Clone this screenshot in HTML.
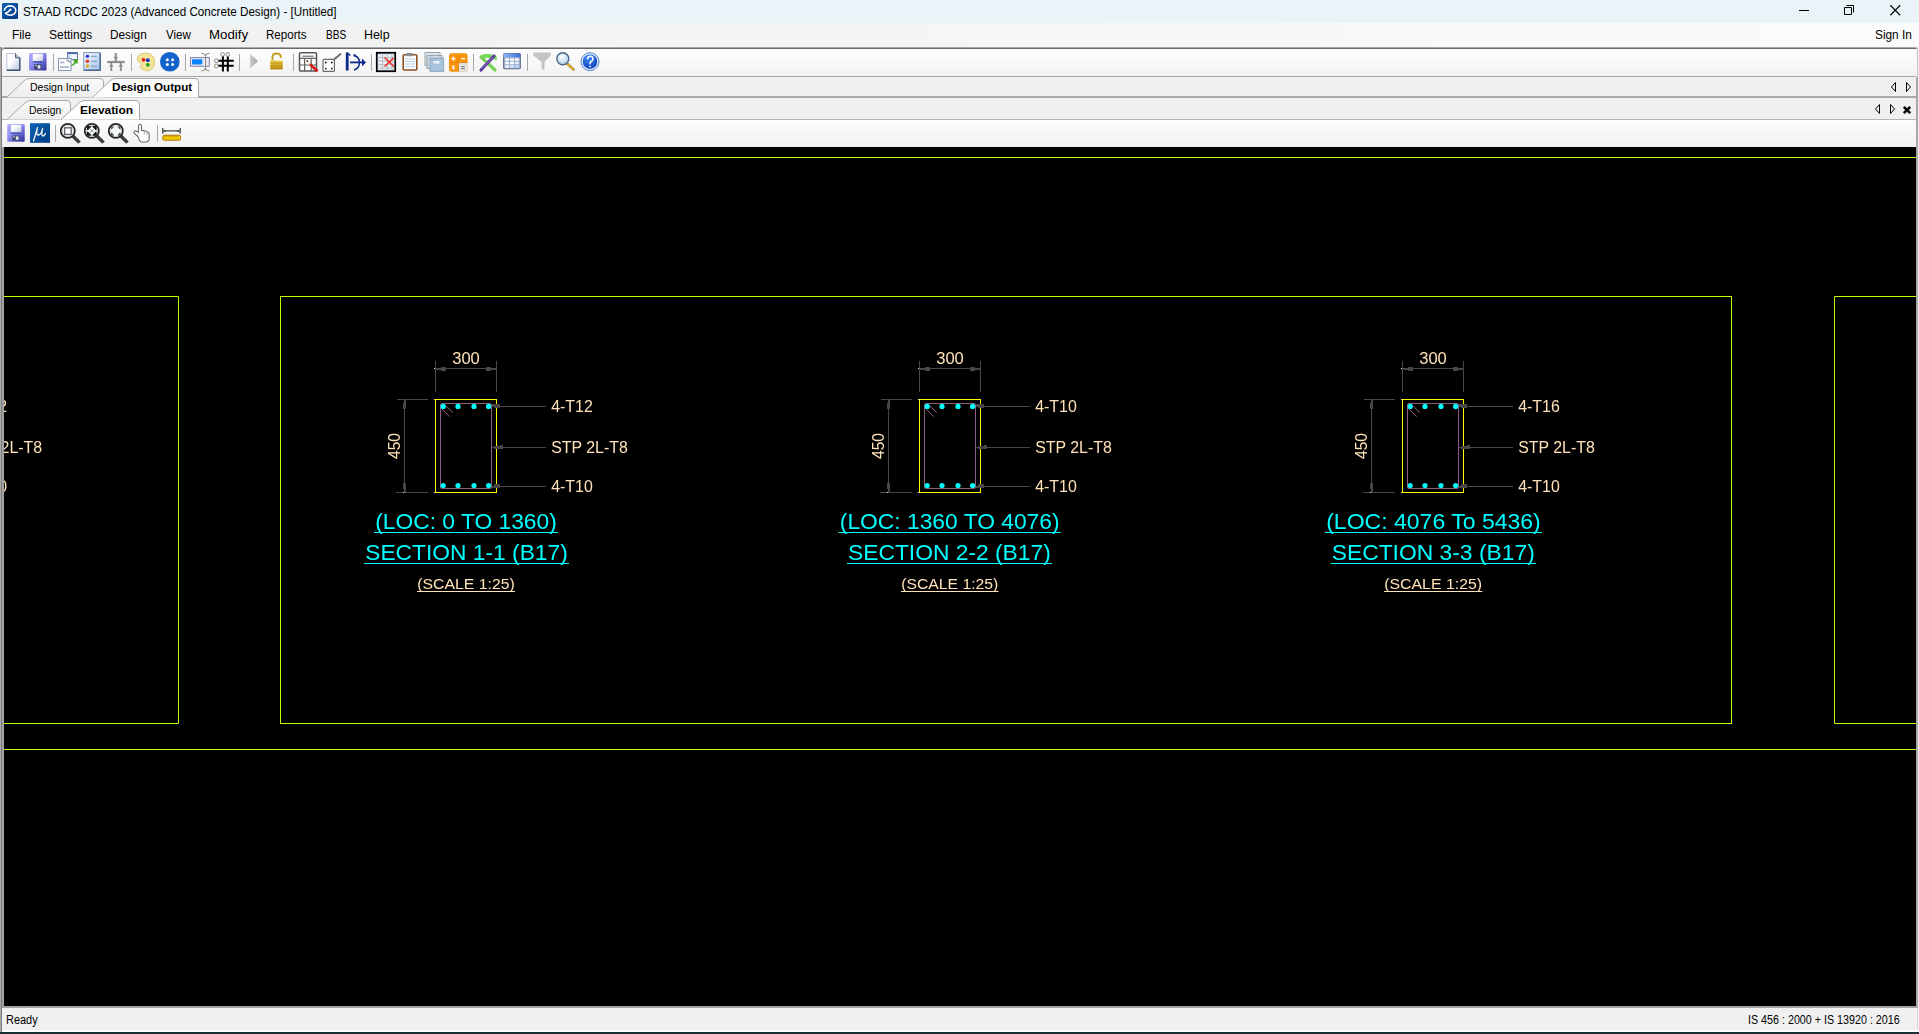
<!DOCTYPE html>
<html><head><meta charset="utf-8">
<style>
*{margin:0;padding:0;box-sizing:border-box}
html,body{width:1919px;height:1034px;overflow:hidden;background:#f0f0f0;font-family:"Liberation Sans",sans-serif;font-size:12px;color:#000}
.a{position:absolute}
.t{position:absolute;white-space:nowrap;line-height:1}
#title{left:0;top:0;width:1919px;height:23px;background:#eaf3f7}
#menu{left:0;top:23px;width:1919px;height:24px;background:linear-gradient(to right,#f0f0f0,#fbfbfb)}
#tb{left:2px;top:47px;width:1916px;height:30px;border-top:1px solid #a8a8a8;box-shadow:inset 0 1px 0 #686868;background:linear-gradient(#fefefe,#f2f2f2);border-bottom:1px solid #a6a6a6;border-top-left-radius:3px;border-top-right-radius:3px}
#tabs1{left:2px;top:77px;width:1915px;height:21px;background:#f0f0f0;border-bottom:2px solid #a9a9a9}
#tabs2{left:2px;top:99px;width:1915px;height:21px;background:#f0f0f0;border-bottom:1px solid #b4b4b4}
#tb2{left:2px;top:120px;width:1915px;height:27px;background:linear-gradient(#fdfdfd,#f0f0f0)}
#cframe{left:2px;top:147px;width:1916px;height:861px;background:#a2a2a2}
#canvas{left:4px;top:147px;width:1912px;height:859px;background:#000;overflow:hidden}
#status{left:2px;top:1008px;width:1916px;height:24px;background:#f0f0f0;border-bottom:1px solid #dadada;border-right:1px solid #d8d8d8}
#swhite{left:0;top:1030px;width:1919px;height:2px;background:#fdfdfd}
#lb{left:0;top:47px;width:2px;height:985px;background:linear-gradient(to right,#a8a8a8 50%,#7e7e7e 50%)}
#rb{left:1916px;top:77px;width:2px;height:931px;background:#a8a8a8}
#rbt{left:1916px;top:49px;width:2px;height:28px;background:linear-gradient(to right,#f4f4f4 0,#f4f4f4 50%,#c8c8c8 50%)}
#bottom{left:0;top:1032px;width:1919px;height:2px;background:#1c2d33}
</style></head><body>
<div id="title" class="a"></div>
<div id="menu" class="a"></div>
<div id="tb" class="a"></div>
<div id="tabs1" class="a"></div>
<div id="tabs2" class="a"></div>
<div id="tb2" class="a"></div>
<div id="cframe" class="a"></div>
<div id="canvas" class="a">
<svg class="a" style="left:0;top:0;will-change:transform" width="1912" height="859" viewBox="4 147 1912 859">
<g stroke="#bfff00" stroke-width="1" fill="none">
<path d="M0 157.5H1920M0 749.5H1920"/>
<path d="M0 296.5H178.5V723.5H0"/>
<rect x="280.5" y="296.5" width="1451" height="427"/>
<path d="M1920 296.5H1834.5V723.5H1920"/>
</g>
<g stroke="#474747" stroke-width="1" fill="none">
<path d="M435.5 361V392M496.5 361V392M435.5 368.5H496.5"/>
<path d="M397 399.5H428M396 492.5H428M404.5 399.5V492.5" transform="translate(0,0)"/>
<path d="M491 406.5H546M491 447.5H546M491 486.5H546"/>
</g>
<g fill="#474747">
<rect x="441" y="367" width="5" height="4"/><rect x="486" y="367" width="5" height="4"/>
<rect x="436" y="368" width="5" height="2"/><rect x="491" y="368" width="5" height="2"/>
<rect x="404" y="400" width="2" height="4"/><rect x="404" y="488" width="2" height="4"/>
<rect x="403" y="403" width="3" height="6"/><rect x="403" y="483" width="3" height="6"/>
</g>
<g fill="#ffe2b8"><rect x="434" y="368" width="1" height="1"/><rect x="434" y="399" width="1" height="1"/><rect x="434" y="492" width="1" height="1"/><rect x="403" y="492" width="1" height="1"/></g>
<rect x="435.5" y="399.5" width="61" height="93" fill="none" stroke="#ffff00" stroke-width="1"/>
<rect x="440.5" y="403.5" width="51" height="85" rx="1.5" fill="none" stroke="#8d5b82" stroke-width="1"/>
<path d="M441.5 408.5L449.7 416.6M446 405.8L452.8 412.7" stroke="#8d5b82" stroke-width="1"/>
<g fill="#474747">
<rect x="492" y="404" width="8" height="2"/><rect x="494" y="406" width="6" height="2"/>
<rect x="494" y="446" width="9" height="3"/><rect x="500" y="445" width="3" height="1"/>
<rect x="494" y="484" width="6" height="2"/><rect x="492" y="486" width="8" height="2"/>
</g>
<g fill="#00ffff">
<circle cx="443.2" cy="406.4" r="2.6"/>
<circle cx="443.2" cy="485.5" r="2.6"/>
<circle cx="458" cy="406.4" r="2.6"/>
<circle cx="458" cy="485.5" r="2.6"/>
<circle cx="474" cy="406.4" r="2.6"/>
<circle cx="474" cy="485.5" r="2.6"/>
<circle cx="488.6" cy="406.4" r="2.6"/>
<circle cx="488.6" cy="485.5" r="2.6"/>
</g>
<g font-family="Liberation Sans, sans-serif">
<text x="452.2" y="364.2" font-size="16.2" fill="#ffe2b8" stroke="#000" stroke-width="0" textLength="27.6" lengthAdjust="spacingAndGlyphs">300</text>
<text x="0" y="0" font-size="16.2" fill="#ffe2b8" stroke="#000" stroke-width="0" textLength="26" lengthAdjust="spacingAndGlyphs" transform="translate(400.2,459) rotate(-90)">450</text>
<text x="551.2" y="412" font-size="15.6" fill="#ffe2b8" stroke="#000" stroke-width="0" textLength="41.6" lengthAdjust="spacingAndGlyphs">4-T12</text>
<text x="551.2" y="453" font-size="15.6" fill="#ffe2b8" stroke="#000" stroke-width="0" textLength="76.6" lengthAdjust="spacingAndGlyphs">STP 2L-T8</text>
<text x="551.2" y="491.7" font-size="15.6" fill="#ffe2b8" stroke="#000" stroke-width="0" textLength="41.6" lengthAdjust="spacingAndGlyphs">4-T10</text>
<text x="375.2" y="528.7" font-size="22.3" fill="#00ffff" stroke="#000" stroke-width="0" textLength="181.6" lengthAdjust="spacingAndGlyphs">(LOC: 0 TO 1360)</text>
<text x="365.2" y="559.8" font-size="22.3" fill="#00ffff" stroke="#000" stroke-width="0" textLength="202.6" lengthAdjust="spacingAndGlyphs">SECTION 1-1 (B17)</text>
<text x="417.2" y="588.5" font-size="14.7" fill="#ffe2b8" stroke="#000" stroke-width="0" textLength="97.6" lengthAdjust="spacingAndGlyphs">(SCALE 1:25)</text>
</g>
<path d="M374 532.5H558M364 563.5H569" stroke="#00ffff" stroke-width="1"/>
<path d="M417 591.5H515" stroke="#ffe2b8" stroke-width="1"/>
<g stroke="#474747" stroke-width="1" fill="none">
<path d="M919.5 361V392M980.5 361V392M919.5 368.5H980.5"/>
<path d="M397 399.5H428M396 492.5H428M404.5 399.5V492.5" transform="translate(484,0)"/>
<path d="M975 406.5H1030M975 447.5H1030M975 486.5H1030"/>
</g>
<g fill="#474747">
<rect x="925" y="367" width="5" height="4"/><rect x="970" y="367" width="5" height="4"/>
<rect x="920" y="368" width="5" height="2"/><rect x="975" y="368" width="5" height="2"/>
<rect x="888" y="400" width="2" height="4"/><rect x="888" y="488" width="2" height="4"/>
<rect x="887" y="403" width="3" height="6"/><rect x="887" y="483" width="3" height="6"/>
</g>
<g fill="#ffe2b8"><rect x="918" y="368" width="1" height="1"/><rect x="918" y="399" width="1" height="1"/><rect x="918" y="492" width="1" height="1"/><rect x="887" y="492" width="1" height="1"/></g>
<rect x="919.5" y="399.5" width="61" height="93" fill="none" stroke="#ffff00" stroke-width="1"/>
<rect x="924.5" y="403.5" width="51" height="85" rx="1.5" fill="none" stroke="#8d5b82" stroke-width="1"/>
<path d="M925.5 408.5L933.7 416.6M930 405.8L936.8 412.7" stroke="#8d5b82" stroke-width="1"/>
<g fill="#474747">
<rect x="976" y="404" width="8" height="2"/><rect x="978" y="406" width="6" height="2"/>
<rect x="978" y="446" width="9" height="3"/><rect x="984" y="445" width="3" height="1"/>
<rect x="978" y="484" width="6" height="2"/><rect x="976" y="486" width="8" height="2"/>
</g>
<g fill="#00ffff">
<circle cx="927.2" cy="406.4" r="2.6"/>
<circle cx="927.2" cy="485.5" r="2.6"/>
<circle cx="942" cy="406.4" r="2.6"/>
<circle cx="942" cy="485.5" r="2.6"/>
<circle cx="958" cy="406.4" r="2.6"/>
<circle cx="958" cy="485.5" r="2.6"/>
<circle cx="972.6" cy="406.4" r="2.6"/>
<circle cx="972.6" cy="485.5" r="2.6"/>
</g>
<g font-family="Liberation Sans, sans-serif">
<text x="936.2" y="364.2" font-size="16.2" fill="#ffe2b8" stroke="#000" stroke-width="0" textLength="27.6" lengthAdjust="spacingAndGlyphs">300</text>
<text x="0" y="0" font-size="16.2" fill="#ffe2b8" stroke="#000" stroke-width="0" textLength="26" lengthAdjust="spacingAndGlyphs" transform="translate(884.2,459) rotate(-90)">450</text>
<text x="1035.2" y="412" font-size="15.6" fill="#ffe2b8" stroke="#000" stroke-width="0" textLength="41.6" lengthAdjust="spacingAndGlyphs">4-T10</text>
<text x="1035.2" y="453" font-size="15.6" fill="#ffe2b8" stroke="#000" stroke-width="0" textLength="76.6" lengthAdjust="spacingAndGlyphs">STP 2L-T8</text>
<text x="1035.2" y="491.7" font-size="15.6" fill="#ffe2b8" stroke="#000" stroke-width="0" textLength="41.6" lengthAdjust="spacingAndGlyphs">4-T10</text>
<text x="839.8" y="528.7" font-size="22.3" fill="#00ffff" stroke="#000" stroke-width="0" textLength="219.8" lengthAdjust="spacingAndGlyphs">(LOC: 1360 TO 4076)</text>
<text x="848.0" y="559.8" font-size="22.3" fill="#00ffff" stroke="#000" stroke-width="0" textLength="202.8" lengthAdjust="spacingAndGlyphs">SECTION 2-2 (B17)</text>
<text x="901.2" y="588.5" font-size="14.7" fill="#ffe2b8" stroke="#000" stroke-width="0" textLength="97.1" lengthAdjust="spacingAndGlyphs">(SCALE 1:25)</text>
</g>
<path d="M838.6 532.5H1060.8M846.8 563.5H1052" stroke="#00ffff" stroke-width="1"/>
<path d="M901 591.5H998.5" stroke="#ffe2b8" stroke-width="1"/>
<g stroke="#474747" stroke-width="1" fill="none">
<path d="M1402.5 361V392M1463.5 361V392M1402.5 368.5H1463.5"/>
<path d="M397 399.5H428M396 492.5H428M404.5 399.5V492.5" transform="translate(967,0)"/>
<path d="M1458 406.5H1513M1458 447.5H1513M1458 486.5H1513"/>
</g>
<g fill="#474747">
<rect x="1408" y="367" width="5" height="4"/><rect x="1453" y="367" width="5" height="4"/>
<rect x="1403" y="368" width="5" height="2"/><rect x="1458" y="368" width="5" height="2"/>
<rect x="1371" y="400" width="2" height="4"/><rect x="1371" y="488" width="2" height="4"/>
<rect x="1370" y="403" width="3" height="6"/><rect x="1370" y="483" width="3" height="6"/>
</g>
<g fill="#ffe2b8"><rect x="1401" y="368" width="1" height="1"/><rect x="1401" y="399" width="1" height="1"/><rect x="1401" y="492" width="1" height="1"/><rect x="1370" y="492" width="1" height="1"/></g>
<rect x="1402.5" y="399.5" width="61" height="93" fill="none" stroke="#ffff00" stroke-width="1"/>
<rect x="1407.5" y="403.5" width="51" height="85" rx="1.5" fill="none" stroke="#8d5b82" stroke-width="1"/>
<path d="M1408.5 408.5L1416.7 416.6M1413 405.8L1419.8 412.7" stroke="#8d5b82" stroke-width="1"/>
<g fill="#474747">
<rect x="1459" y="404" width="8" height="2"/><rect x="1461" y="406" width="6" height="2"/>
<rect x="1461" y="446" width="9" height="3"/><rect x="1467" y="445" width="3" height="1"/>
<rect x="1461" y="484" width="6" height="2"/><rect x="1459" y="486" width="8" height="2"/>
</g>
<g fill="#00ffff">
<circle cx="1410.2" cy="406.4" r="2.6"/>
<circle cx="1410.2" cy="485.5" r="2.6"/>
<circle cx="1425" cy="406.4" r="2.6"/>
<circle cx="1425" cy="485.5" r="2.6"/>
<circle cx="1441" cy="406.4" r="2.6"/>
<circle cx="1441" cy="485.5" r="2.6"/>
<circle cx="1455.6" cy="406.4" r="2.6"/>
<circle cx="1455.6" cy="485.5" r="2.6"/>
</g>
<g font-family="Liberation Sans, sans-serif">
<text x="1419.2" y="364.2" font-size="16.2" fill="#ffe2b8" stroke="#000" stroke-width="0" textLength="27.6" lengthAdjust="spacingAndGlyphs">300</text>
<text x="0" y="0" font-size="16.2" fill="#ffe2b8" stroke="#000" stroke-width="0" textLength="26" lengthAdjust="spacingAndGlyphs" transform="translate(1367.2,459) rotate(-90)">450</text>
<text x="1518.2" y="412" font-size="15.6" fill="#ffe2b8" stroke="#000" stroke-width="0" textLength="41.6" lengthAdjust="spacingAndGlyphs">4-T16</text>
<text x="1518.2" y="453" font-size="15.6" fill="#ffe2b8" stroke="#000" stroke-width="0" textLength="76.6" lengthAdjust="spacingAndGlyphs">STP 2L-T8</text>
<text x="1518.2" y="491.7" font-size="15.6" fill="#ffe2b8" stroke="#000" stroke-width="0" textLength="41.6" lengthAdjust="spacingAndGlyphs">4-T10</text>
<text x="1326.2" y="528.7" font-size="22.3" fill="#00ffff" stroke="#000" stroke-width="0" textLength="214.6" lengthAdjust="spacingAndGlyphs">(LOC: 4076 To 5436)</text>
<text x="1331.7" y="559.8" font-size="22.3" fill="#00ffff" stroke="#000" stroke-width="0" textLength="203.1" lengthAdjust="spacingAndGlyphs">SECTION 3-3 (B17)</text>
<text x="1384.2" y="588.5" font-size="14.7" fill="#ffe2b8" stroke="#000" stroke-width="0" textLength="97.9" lengthAdjust="spacingAndGlyphs">(SCALE 1:25)</text>
</g>
<path d="M1325 532.5H1542M1330.5 563.5H1536" stroke="#00ffff" stroke-width="1"/>
<path d="M1384 591.5H1482.3" stroke="#ffe2b8" stroke-width="1"/>
<g stroke="#474747" stroke-width="1" fill="none">
<path d="M-150.2 361V392M-89.2 361V392M-150.2 368.5H-89.2"/>
<path d="M397 399.5H428M396 492.5H428M404.5 399.5V492.5" transform="translate(-585.7,0)"/>
<path d="M-94.7 406.5H-39.7M-94.7 447.5H-39.7M-94.7 486.5H-39.7"/>
</g>
<g fill="#474747">
<rect x="-144.7" y="367" width="5" height="4"/><rect x="-99.7" y="367" width="5" height="4"/>
<rect x="-149.7" y="368" width="5" height="2"/><rect x="-94.7" y="368" width="5" height="2"/>
<rect x="-181.7" y="400" width="2" height="4"/><rect x="-181.7" y="488" width="2" height="4"/>
<rect x="-182.7" y="403" width="3" height="6"/><rect x="-182.7" y="483" width="3" height="6"/>
</g>
<g fill="#ffe2b8"><rect x="-151.7" y="368" width="1" height="1"/><rect x="-151.7" y="399" width="1" height="1"/><rect x="-151.7" y="492" width="1" height="1"/><rect x="-182.7" y="492" width="1" height="1"/></g>
<rect x="-150.2" y="399.5" width="61" height="93" fill="none" stroke="#ffff00" stroke-width="1"/>
<rect x="-145.2" y="403.5" width="51" height="85" rx="1.5" fill="none" stroke="#8d5b82" stroke-width="1"/>
<path d="M-144.2 408.5L-136.0 416.6M-139.7 405.8L-132.9 412.7" stroke="#8d5b82" stroke-width="1"/>
<g fill="#474747">
<rect x="-93.7" y="404" width="8" height="2"/><rect x="-91.7" y="406" width="6" height="2"/>
<rect x="-91.7" y="446" width="9" height="3"/><rect x="-85.7" y="445" width="3" height="1"/>
<rect x="-91.7" y="484" width="6" height="2"/><rect x="-93.7" y="486" width="8" height="2"/>
</g>
<g fill="#00ffff">
<circle cx="-142.5" cy="406.4" r="2.6"/>
<circle cx="-142.5" cy="485.5" r="2.6"/>
<circle cx="-127.7" cy="406.4" r="2.6"/>
<circle cx="-127.7" cy="485.5" r="2.6"/>
<circle cx="-111.7" cy="406.4" r="2.6"/>
<circle cx="-111.7" cy="485.5" r="2.6"/>
<circle cx="-97.1" cy="406.4" r="2.6"/>
<circle cx="-97.1" cy="485.5" r="2.6"/>
</g>
<g font-family="Liberation Sans, sans-serif">
<text x="-133.5" y="364.2" font-size="16.2" fill="#ffe2b8" stroke="#000" stroke-width="0" textLength="27.6" lengthAdjust="spacingAndGlyphs">300</text>
<text x="0" y="0" font-size="16.2" fill="#ffe2b8" stroke="#000" stroke-width="0" textLength="26" lengthAdjust="spacingAndGlyphs" transform="translate(-185.5,459) rotate(-90)">450</text>
<text x="-34.5" y="412" font-size="15.6" fill="#ffe2b8" stroke="#000" stroke-width="0" textLength="41.6" lengthAdjust="spacingAndGlyphs">4-T12</text>
<text x="-34.5" y="453" font-size="15.6" fill="#ffe2b8" stroke="#000" stroke-width="0" textLength="76.6" lengthAdjust="spacingAndGlyphs">STP 2L-T8</text>
<text x="-34.5" y="491.7" font-size="15.6" fill="#ffe2b8" stroke="#000" stroke-width="0" textLength="41.6" lengthAdjust="spacingAndGlyphs">4-T10</text>
<text x="-300.8" y="528.7" font-size="22.3" fill="#00ffff" stroke="#000" stroke-width="0" textLength="101.6" lengthAdjust="spacingAndGlyphs">(LOC)</text>
<text x="-300.8" y="559.8" font-size="22.3" fill="#00ffff" stroke="#000" stroke-width="0" textLength="101.6" lengthAdjust="spacingAndGlyphs">SECTION</text>
<text x="-300.8" y="588.5" font-size="14.7" fill="#ffe2b8" stroke="#000" stroke-width="0" textLength="101.6" lengthAdjust="spacingAndGlyphs">(SCALE 1:25)</text>
</g>
<path d="M-302 532.5H-198M-302 563.5H-198" stroke="#00ffff" stroke-width="1"/>
<path d="M-301 591.5H-199" stroke="#ffe2b8" stroke-width="1"/>
</svg>
</div>
<div id="status" class="a"></div>
<div id="swhite" class="a"></div>
<div id="lb" class="a"></div>
<div id="rb" class="a"></div>
<div id="rbt" class="a"></div>
<div id="bottom" class="a"></div>

<svg class="a" style="left:0;top:0" width="1919" height="147">
<defs>
<linearGradient id="tabg" x1="0" y1="0" x2="0" y2="1"><stop offset="0" stop-color="#fafafa"/><stop offset="1" stop-color="#ededed"/></linearGradient>
</defs>
<path d="M1799 10.5H1809" stroke="#000" stroke-width="1"/>
<path d="M1844.5 7.5H1851.5V14.5H1844.5Z" fill="none" stroke="#000" stroke-width="1"/>
<path d="M1846.5 5.5H1853.5V12.5" fill="none" stroke="#000" stroke-width="1"/>
<path d="M1890.3 5.3L1900.2 15.2M1900.2 5.3L1890.3 15.2" stroke="#111" stroke-width="1.3"/>
<path d="M6.5 97.5L25 80Q27 78.5 30 78.5H100Q103.5 78.5 103.5 82V97.5" fill="url(#tabg)" stroke="#a8a8a8" stroke-width="1"/>
<path d="M92.5 97.5L111 80Q113 78.5 116 78.5H195Q198.5 78.5 198.5 82V97.5" fill="#fdfdfd" stroke="#a8a8a8" stroke-width="1"/>
<path d="M7 119.5L26 102Q28 100.5 31 100.5H67Q70.5 100.5 70.5 104V119.5" fill="url(#tabg)" stroke="#a8a8a8" stroke-width="1"/>
<path d="M61 119.5L80 102Q82 100.5 85 100.5H136Q139.5 100.5 139.5 104V119.5" fill="#fdfdfd" stroke="#a8a8a8" stroke-width="1"/>
<path d="M1895.5 82.5L1891.5 87L1895.5 91.5Z" fill="none" stroke="#000" stroke-width="1"/>
<path d="M1906.5 82.5L1910.5 87L1906.5 91.5Z" fill="none" stroke="#000" stroke-width="1"/>
<path d="M1879.5 104.5L1875.5 109L1879.5 113.5Z" fill="none" stroke="#000" stroke-width="1"/>
<path d="M1890.5 104.5L1894.5 109L1890.5 113.5Z" fill="none" stroke="#000" stroke-width="1"/>
<path d="M1903.8 106.8L1910.2 113.2M1910.2 106.8L1903.8 113.2" stroke="#000" stroke-width="2.5"/>
</svg>

<svg class="a" style="left:0;top:0" width="620" height="147">
<defs>
<linearGradient id="flp" x1="0" y1="0" x2="1" y2="1"><stop offset="0" stop-color="#b4b4ff"/><stop offset="0.45" stop-color="#8c8cf0"/><stop offset="1" stop-color="#2c2c98"/></linearGradient>
<linearGradient id="flpl" x1="0" y1="0" x2="1" y2="1"><stop offset="0.3" stop-color="#ffffff"/><stop offset="1" stop-color="#b8c0d8"/></linearGradient>
<linearGradient id="doc" x1="0" y1="0" x2="1" y2="1"><stop offset="0.4" stop-color="#ffffff"/><stop offset="1" stop-color="#b4c4e0"/></linearGradient>
<linearGradient id="lst" x1="0" y1="0" x2="1" y2="1"><stop offset="0" stop-color="#ffffff"/><stop offset="1" stop-color="#9cc0f0"/></linearGradient>
<linearGradient id="mu" x1="0" y1="0" x2="1" y2="1"><stop offset="0" stop-color="#0a64b8"/><stop offset="1" stop-color="#003c80"/></linearGradient>
<linearGradient id="gold" x1="0" y1="0" x2="0" y2="1"><stop offset="0" stop-color="#f0d050"/><stop offset="1" stop-color="#c09010"/></linearGradient>
<linearGradient id="tbl" x1="0" y1="0" x2="1" y2="0"><stop offset="0" stop-color="#90b8f8"/><stop offset="1" stop-color="#3c70d8"/></linearGradient>
<radialGradient id="lens" cx="0.4" cy="0.35" r="0.7"><stop offset="0" stop-color="#ffffff"/><stop offset="1" stop-color="#a8d0e8"/></radialGradient>
<radialGradient id="help" cx="0.4" cy="0.3" r="0.8"><stop offset="0" stop-color="#3c8cf8"/><stop offset="1" stop-color="#0838b0"/></radialGradient>
<linearGradient id="play" x1="0" y1="0" x2="1" y2="0"><stop offset="0" stop-color="#d0d0d0"/><stop offset="1" stop-color="#a0a0a0"/></linearGradient>
</defs>
<path d="M53.5 54V71" stroke="#a8a8a8" stroke-width="1"/>
<path d="M131.5 54V71" stroke="#a8a8a8" stroke-width="1"/>
<path d="M185.5 54V71" stroke="#a8a8a8" stroke-width="1"/>
<path d="M239.5 54V71" stroke="#a8a8a8" stroke-width="1"/>
<path d="M293.5 54V71" stroke="#a8a8a8" stroke-width="1"/>
<path d="M371.5 54V71" stroke="#a8a8a8" stroke-width="1"/>
<path d="M473.5 54V71" stroke="#a8a8a8" stroke-width="1"/>
<path d="M527.5 54V71" stroke="#a8a8a8" stroke-width="1"/>
<path d="M55.5 125V142" stroke="#a8a8a8" stroke-width="1"/>
<path d="M157.5 125V142" stroke="#a8a8a8" stroke-width="1"/>
<path d="M6.8 53.5H15.5L19.8 57.8V70.3H6.8Z" fill="url(#doc)" stroke="#b8c4d4" stroke-width="1"/>
<path d="M19.8 57.8V70.3H6.8" fill="none" stroke="#3c5070" stroke-width="1.4"/>
<path d="M15.5 53.5V57.8H19.8" fill="#a8b8cc" stroke="#50607c" stroke-width="1"/>
<g transform="translate(29,53)">
<rect x="0" y="0" width="17.5" height="17.5" rx="1" fill="url(#flp)"/>
<rect x="3.8" y="0.8" width="10.3" height="8.4" fill="url(#flpl)"/>
<rect x="3.8" y="8.2" width="10.3" height="1.3" fill="#2838b0"/>
<rect x="5.2" y="11.3" width="7" height="5" fill="#384060"/>
<rect x="8.6" y="12.2" width="2.8" height="3.4" fill="#e0e8f0"/>
<rect x="6" y="12" width="1.6" height="1.4" fill="#c0c8d8"/>
</g>
<rect x="67.5" y="52.5" width="10" height="7" fill="#f4f6fc" stroke="#6880b0" stroke-width="1"/>
<rect x="67.5" y="52.5" width="10" height="1.6" fill="#4868b0"/>
<rect x="68.2" y="54.3" width="2.2" height="4.6" fill="#c8d8f0"/>
<rect x="58.5" y="58.5" width="12.5" height="12" fill="#ffffff" stroke="#8094b4" stroke-width="1"/>
<rect x="60" y="61.5" width="4.5" height="1.8" fill="#a8b8d0"/><rect x="60" y="66.2" width="9" height="1.8" fill="#a8b8d0"/>
<path d="M66.6 59.8L70.5 62.6" stroke="#7088a8" stroke-width="1.2"/>
<path d="M71 65.8C73 64.5 74.5 63 75 61.5L73.3 60.8L77.5 59.2L77.2 63.4L75.8 62.6C75 64.2 73.2 65.6 71 65.8Z" fill="#40b020" stroke="#30a010" stroke-width="0.6"/>
<rect x="83.8" y="52.6" width="16.4" height="17.6" fill="url(#lst)" stroke="#7890b0" stroke-width="1"/>
<path d="M100.2 53V70.2H84.2" fill="none" stroke="#50688c" stroke-width="1.4"/>
<circle cx="87.4" cy="56.2" r="1.8" fill="#3838e0"/><circle cx="87.4" cy="61.2" r="1.8" fill="#e04020"/><circle cx="87.4" cy="66" r="1.8" fill="#e0b020"/>
<path d="M91 56.3H96.8M91 61.3H96.8M91 66.1H96.8" stroke="#8ca0c0" stroke-width="1.2"/>
<g stroke="#8c8c8c" fill="#8c8c8c">
<path d="M115.8 53V61" stroke-width="2"/><path d="M114 57.5H117.6" stroke-width="1.5"/>
<path d="M107.3 62H124.7" stroke-width="2.2"/>
<path d="M111.3 63V71M120.8 63V71" stroke-width="1.8"/>
<path d="M109.8 66.5L111.3 64L112.8 66.5ZM119.3 66.5L120.8 64L122.3 66.5Z" stroke-width="0.8"/>
</g>
<path d="M145.5 53.2C151 53 155 57 154.6 62.5C154.4 66.5 152 70.5 148 70.8C144.5 71 141 69 140 66.5C141.5 65 142.5 63.5 140.5 62.8C138.5 62.2 137 60.5 137.4 58.2C138 55 141.5 53.3 145.5 53.2Z" fill="#f2e49a" stroke="#d8c060" stroke-width="0.9"/>
<circle cx="143.5" cy="59.8" r="1.9" fill="#e02010"/><circle cx="147.8" cy="60.2" r="1.9" fill="#1030c0"/><circle cx="147.8" cy="64.8" r="1.9" fill="#20a020"/>
<circle cx="169.8" cy="61.7" r="9.8" fill="#1262cc"/>
<g fill="#ffffff"><circle cx="167.3" cy="59.7" r="1.5"/><circle cx="172.6" cy="59.7" r="1.5"/><circle cx="167.3" cy="64.4" r="1.5"/><circle cx="172.6" cy="64.4" r="1.5"/></g>
<rect x="190.5" y="57.6" width="18.8" height="8.6" fill="#ecebf0" stroke="#8080a8" stroke-width="1"/>
<rect x="192" y="59.2" width="10.3" height="5.2" rx="0.8" fill="#0a84ff"/>
<path d="M205.5 54V70M201.5 53.2Q205.5 53.5 205.5 56Q205.5 53.5 209.5 53.2M201.5 71Q205.5 70.7 205.5 68Q205.5 70.7 209.5 71" fill="none" stroke="#8a8a8a" stroke-width="1"/>
<path d="M222.9 53V71.5M227.8 53V71.5M217 60.8H233.7M217 65.8H233.7" stroke="#000" stroke-width="2"/>
<g fill="#f4f4f4" stroke="#909090" stroke-width="1"><circle cx="222.6" cy="54.4" r="1.9"/><circle cx="227.8" cy="54.4" r="1.9"/><circle cx="216.4" cy="60.8" r="1.9"/><circle cx="216.4" cy="66" r="1.9"/></g>
<path d="M250 53.8L258 61.2L250 68.3Z" fill="url(#play)"/>
<path d="M272.5 60.5V57Q272.5 53.4 276.6 53.4Q280.8 53.4 280.8 57V58" fill="none" stroke="#c8a020" stroke-width="2"/>
<rect x="270.2" y="60.5" width="12.6" height="9" rx="0.8" fill="url(#gold)"/>
<path d="M270.5 63H282.5M270.5 65.5H282.5M270.5 68H282.5" stroke="#b08810" stroke-width="0.7"/>
<rect x="299.5" y="52.7" width="17" height="18.4" rx="1" fill="#ffffff" stroke="#585858" stroke-width="1.5"/>
<path d="M302.5 56.2H313.6" stroke="#707070" stroke-width="1.2"/>
<path d="M300 58.4H316M300 65H316M304.6 58.4V71M311.2 58.4V71" stroke="#606060" stroke-width="1.2"/>
<path d="M310.5 63.5L318.2 70.2L316.5 72L309 64.8Z" fill="#e81818" stroke="#b00000" stroke-width="0.6"/><path d="M306.8 60.5L310.8 63.3L309.2 65.2Z" fill="#e8d8b8"/><circle cx="307.3" cy="61" r="0.9" fill="#303030"/>
<rect x="323" y="59.4" width="11.4" height="12" rx="1" fill="#ffffff" stroke="#6c6c6c" stroke-width="1.2"/>
<g fill="#111"><circle cx="325.8" cy="62.5" r="0.9"/><circle cx="331.8" cy="62.5" r="0.9"/><circle cx="325.8" cy="68.6" r="0.9"/><circle cx="331.8" cy="68.6" r="0.9"/></g>
<path d="M334 59.5L340.5 54" stroke="#707070" stroke-width="2" stroke-linecap="round"/>
<g stroke="#0c2888" fill="none">
<path d="M347.2 52.5V70.5" stroke-width="2.8"/><path d="M347.2 53L350.5 55.5" stroke-width="1.4"/>
<path d="M350 62.4H363" stroke-width="1.8"/>
<path d="M354 55.5Q359.5 57 359.5 62.4Q359.5 68 354 70" stroke-width="1.5"/>
</g>
<path d="M362 58.5L366 62.4L362 66.2Z" fill="#0c2888"/><rect x="353.5" y="54.2" width="2" height="2" fill="#0c2888"/>
<rect x="376.8" y="52.8" width="18.4" height="18.4" fill="#e4eefa" stroke="#000" stroke-width="1.8"/>
<path d="M382.5 53.5V70.5M387.5 53.5V70.5M392 53.5V70.5M377.5 57.5H394.5M377.5 61H394.5M377.5 64.5H394.5M377.5 68H394.5" stroke="#b8b8b8" stroke-width="0.9"/>
<path d="M384.5 57.5L393.8 66.5M393.5 58.2L384.5 66.5" stroke="#f03020" stroke-width="1.6"/>
<rect x="403.2" y="54.8" width="13.6" height="15.2" rx="1" fill="#ffffff" stroke="#8c5224" stroke-width="1.6"/>
<path d="M405 59H415M405 61.5H415M405 64H415M405 66.5H415" stroke="#b8d0e4" stroke-width="1.2"/>
<rect x="406.3" y="53" width="6.4" height="3.2" rx="0.6" fill="#8c8c8c"/>
<rect x="425" y="52.5" width="15" height="13" fill="#dfe3e8" stroke="#9aa4ae" stroke-width="1"/>
<rect x="427" y="55.5" width="15" height="13" fill="#cdd6e0" stroke="#9aa4ae" stroke-width="1"/>
<rect x="430" y="58.3" width="13.6" height="13" fill="#a8c4dc" stroke="#8aa6be" stroke-width="1"/>
<rect x="433.5" y="61" width="6" height="2.6" fill="#e8f0f8"/>
<rect x="449" y="53.2" width="18.6" height="18.6" rx="2.5" fill="#f7960e"/>
<path d="M458.5 71.8V62.6H467.6V69.3Q467.6 71.8 465.1 71.8Z" fill="#e2e2e2"/>
<path d="M458.5 53.5V71.5M449.3 62.6H467.3" stroke="#e08000" stroke-width="0.8"/>
<path d="M453.4 56.7V60.7M451.4 58.7H455.4M461.2 58.7H465" stroke="#ffffff" stroke-width="1.3"/>
<path d="M451.8 65.8L455 69M455 65.8L451.8 69M453.4 65.4V69.4" stroke="#ffffff" stroke-width="0.9"/>
<path d="M461.3 66.6H464.7M461.3 68.6H464.7" stroke="#888" stroke-width="1.1"/>
<path d="M480 56Q488 51 496 57L493 60Q488 56 483 59Z" fill="#78d858"/>
<path d="M481 57L495 70" stroke="#78d058" stroke-width="3.2" stroke-linecap="round"/>
<path d="M495 56L496 60" stroke="#78d858" stroke-width="2.5"/>
<path d="M481 70L494 56" stroke="#5a3c98" stroke-width="3.2" stroke-linecap="round"/>
<path d="M481.5 69L493 57" stroke="#9870d0" stroke-width="1"/>
<rect x="503.6" y="53.5" width="16.8" height="15.3" rx="0.8" fill="#9fb0cc" stroke="#5c6c8c" stroke-width="1"/>
<rect x="503.6" y="53.5" width="16.8" height="3.8" fill="url(#tbl)"/>
<g fill="#ffffff"><rect x="505.2" y="58.3" width="3.8" height="2.4"/><rect x="510.1" y="58.3" width="3.8" height="2.4"/><rect x="515" y="58.3" width="3.8" height="2.4"/><rect x="505.2" y="61.8" width="3.8" height="2.4"/><rect x="510.1" y="61.8" width="3.8" height="2.4"/><rect x="515" y="61.8" width="3.8" height="2.4" fill="#e0ecff"/><rect x="505.2" y="65.3" width="3.8" height="2.4"/><rect x="510.1" y="65.3" width="3.8" height="2.4" fill="#e0ecff"/><rect x="515" y="65.3" width="3.8" height="2.4" fill="#c0d8ff"/></g>
<path d="M533.3 52.5H550.7V55.5L544.5 62V70.5L541.5 68.5V62L533.3 55.5Z" fill="#c4c4c4"/>
<path d="M567 63.5L573.5 69.5" stroke="#a08020" stroke-width="2.6" stroke-linecap="round"/><path d="M567 63.5L573.5 69.5" stroke="#e8c040" stroke-width="1.2" stroke-linecap="round"/>
<circle cx="562.8" cy="58.7" r="6" fill="url(#lens)" stroke="#4c6488" stroke-width="1.4"/>
<circle cx="590" cy="61.7" r="9" fill="#d8e8f8" stroke="#5a8ad8" stroke-width="1"/>
<circle cx="590" cy="61.7" r="7.2" fill="url(#help)"/>
<path d="M587.3 59.2Q587.5 56.2 590.3 56.2Q593.2 56.3 593 59Q592.8 60.8 590.8 61.8Q590 62.3 590 64.2" fill="none" stroke="#ffffff" stroke-width="1.6"/><circle cx="590" cy="66.6" r="0.9" fill="#fff"/>
<g transform="translate(7.2,124.2)">
<rect x="0" y="0" width="17.5" height="17.5" rx="1" fill="url(#flp)"/>
<rect x="3.8" y="0.8" width="10.3" height="8.4" fill="url(#flpl)"/>
<rect x="3.8" y="8.2" width="10.3" height="1.3" fill="#2838b0"/>
<rect x="5.2" y="11.3" width="7" height="5" fill="#384060"/>
<rect x="8.6" y="12.2" width="2.8" height="3.4" fill="#e0e8f0"/>
<rect x="6" y="12" width="1.6" height="1.4" fill="#c0c8d8"/>
</g>
<rect x="30" y="123.2" width="20" height="19.6" fill="url(#mu)"/>
<path d="M37.5 127.5L33.5 141M37.2 129Q35.8 135.5 38.5 135Q41.5 134.5 42.5 128.5M42.5 128.5Q41 136 43 136Q44.5 135.8 45.5 133.5" fill="none" stroke="#f4f4f4" stroke-width="1.3" stroke-linecap="round"/>
<g>
<path d="M72.8 135.9L78.3 141.4" stroke="#3c3c3c" stroke-width="3.4" stroke-linecap="square"/>
<circle cx="67.8" cy="130.9" r="7" fill="#f4f8f8" stroke="#262626" stroke-width="1.8"/>
<circle cx="67.8" cy="130.9" r="5.6" fill="none" stroke="#b8c4c4" stroke-width="0.8"/>
<rect x="64.6" y="127.8" width="6.6" height="6.6" fill="#fff" stroke="#606068" stroke-width="1.3"/>
</g>
<g>
<path d="M96.8 135.9L102.3 141.4" stroke="#3c3c3c" stroke-width="3.4" stroke-linecap="square"/>
<circle cx="91.8" cy="130.9" r="7" fill="#f4f8f8" stroke="#262626" stroke-width="1.8"/>
<circle cx="91.8" cy="130.9" r="5.6" fill="none" stroke="#b8c4c4" stroke-width="0.8"/>
<path d="M87.5 130V126.6H90.9ZM92.7 126.6H96.1V130ZM96.1 131.8V135.2H92.7ZM90.9 135.2H87.5V131.8Z" fill="#181818" stroke="#181818" stroke-width="1"/><path d="M90 129L93.6 132.8M93.6 129L90 132.8" stroke="#909090" stroke-width="0.9"/>
</g>
<g>
<path d="M120.8 135.9L126.3 141.4" stroke="#3c3c3c" stroke-width="3.4" stroke-linecap="square"/>
<circle cx="115.8" cy="130.9" r="7" fill="#f4f8f8" stroke="#262626" stroke-width="1.8"/>
<circle cx="115.8" cy="130.9" r="5.6" fill="none" stroke="#b8c4c4" stroke-width="0.8"/>
<path d="M111.8 129V127H113.8M117.8 127H119.8V129M119.8 132.8V134.8H117.8M113.8 134.8H111.8V132.8" fill="none" stroke="#303030" stroke-width="1.2"/>
</g>
<path d="M138 136.5L134.5 133.5Q133.2 132.3 134.5 131.2Q135.5 130.5 137 131.5L138.5 132.5V126Q138.5 124.3 140 124.3Q141.5 124.3 141.5 126V130.5Q143.5 130 144.5 131Q146.5 130.8 147.3 132Q149.2 132.2 149.2 134V138Q149.2 142 145.5 142H141.5Q139.5 142 138 136.5Z" fill="#ffffff" stroke="#707070" stroke-width="1.1"/>
<path d="M144.3 131.2V134.5M147.2 132.2V135" stroke="#909090" stroke-width="0.8"/>
<path d="M162.8 128V133.8M180.2 128V133.8M163 130.9H180" stroke="#484848" stroke-width="1.3"/>
<circle cx="165" cy="130.9" r="1" fill="#484848"/><circle cx="178" cy="130.9" r="1" fill="#484848"/>
<rect x="162.8" y="135.2" width="17.8" height="5" rx="1.5" fill="#f0c800" stroke="#b07810" stroke-width="1"/>
<path d="M165 135.6V137M167 135.6V136.6M169 135.6V137M171 135.6V136.6M173 135.6V137M175 135.6V136.6M177 135.6V137" stroke="#906000" stroke-width="0.6"/>
<rect x="17" y="2.8" width="0" height="0"/>
</svg>
<svg class="a" style="left:0;top:0" width="22" height="22">
<defs><linearGradient id="lg" x1="0" y1="0" x2="1" y2="1"><stop offset="0" stop-color="#0a5cae"/><stop offset="1" stop-color="#043a86"/></linearGradient></defs>
<path d="M3 3H17L18 4V18L17 19H3L2 18V4Z" fill="url(#lg)"/>
<path d="M4.3 10.6C4.6 7.4 7.6 5.9 10.3 5.9C13.6 5.9 15.8 8 15.8 10.6C15.8 13.4 13.2 15.3 10.2 15.2C8.2 15.1 6.4 14.4 5.4 13.3L7.8 12.3L10.6 9.3V10.8" fill="none" stroke="#ffffff" stroke-width="1.6" stroke-linejoin="round"/>
</svg>
<div class="t" style="left:23.03px;top:6.00px;font-size:12px;transform:scaleX(0.9720);transform-origin:0 0">STAAD RCDC 2023 (Advanced Concrete Design) - [Untitled]</div>
<div class="t" style="left:12.32px;top:29.00px;font-size:12px;transform:scaleX(0.9833);transform-origin:0 0">File</div>
<div class="t" style="left:49.00px;top:29.00px;font-size:12px;transform:scaleX(1.0000);transform-origin:0 0">Settings</div>
<div class="t" style="left:110.02px;top:29.00px;font-size:12px;transform:scaleX(0.9833);transform-origin:0 0">Design</div>
<div class="t" style="left:165.60px;top:29.00px;font-size:12px;transform:scaleX(0.9615);transform-origin:0 0">View</div>
<div class="t" style="left:209.29px;top:29.00px;font-size:12px;transform:scaleX(1.1059);transform-origin:0 0">Modify</div>
<div class="t" style="left:266.23px;top:29.00px;font-size:12px;transform:scaleX(0.9659);transform-origin:0 0">Reports</div>
<div class="t" style="left:325.76px;top:29.00px;font-size:12px;transform:scaleX(0.8391);transform-origin:0 0">BBS</div>
<div class="t" style="left:364.17px;top:29.00px;font-size:12px;transform:scaleX(1.0348);transform-origin:0 0">Help</div>
<div class="t" style="left:1875.01px;top:29.00px;font-size:12px;transform:scaleX(0.9861);transform-origin:0 0">Sign In</div>
<div class="t" style="left:30.24px;top:82.30px;font-size:11px;transform:scaleX(0.9590);transform-origin:0 0">Design Input</div>
<div class="t" style="left:111.64px;top:82.30px;font-size:11px;font-weight:bold;transform:scaleX(1.0573);transform-origin:0 0">Design Output</div>
<div class="t" style="left:28.55px;top:104.70px;font-size:11px;transform:scaleX(0.9455);transform-origin:0 0">Design</div>
<div class="t" style="left:79.92px;top:104.70px;font-size:11px;font-weight:bold;transform:scaleX(1.0833);transform-origin:0 0">Elevation</div>
<div class="t" style="left:5.69px;top:1014.20px;font-size:12px;transform:scaleX(0.9118);transform-origin:0 0">Ready</div>
<div class="t" style="left:1747.61px;top:1013.80px;font-size:12px;transform:scaleX(0.8935);transform-origin:0 0">IS 456 : 2000 + IS 13920 : 2016</div>
</body></html>
